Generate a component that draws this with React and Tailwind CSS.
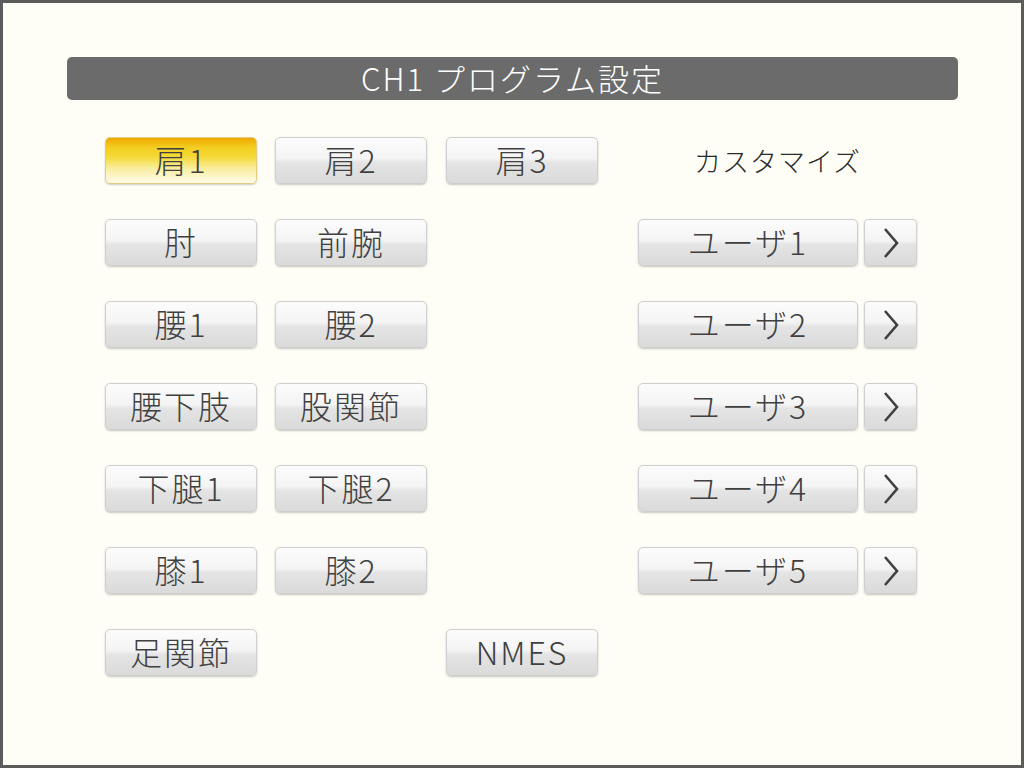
import React from 'react';

const FONT = { fontFamily: '"Noto Sans CJK JP", "Noto Sans", sans-serif' };

const grayBtn =
  'bg-[linear-gradient(to_bottom,#fcfcfc_0%,#f4f4f4_45%,#e4e4e4_55%,#dadada_100%)] border border-[#cfcfcf] shadow-[0_1px_2px_rgba(0,0,0,0.22)]';
const activeBtn =
  'bg-[linear-gradient(to_bottom,#efa800_0%,#f3cf22_22%,#f4d936_42%,#f9eea0_68%,#fefbea_100%)] border border-[#e2cc80] shadow-[0_1px_2px_rgba(0,0,0,0.2)]';

const Btn = ({ label, active, w = 'w-[152px]' }) => (
  <div
    className={`${w} h-[47px] rounded-[5px] flex items-center justify-center pb-[4px] text-[32px] font-light leading-none text-[#404040] ${
      active ? activeBtn : grayBtn
    }`}
  >
    <span className="tracking-[2px]">{label}</span>
  </div>
);

const Spacer = () => <div className="w-[152px] h-[47px]" />;

const UserRow = ({ n }) => (
  <div className="flex ml-[40px] gap-[6px]">
    <Btn label={`ユーザ${n}`} w="w-[220px]" />
    <div className={`w-[53px] h-[47px] rounded-[4px] flex items-center justify-center ${grayBtn}`}>
      <svg width="18" height="32" viewBox="0 0 18 32">
        <polyline points="3,2 15,16 3,30" fill="none" stroke="#404040" strokeWidth="2.6" />
      </svg>
    </div>
  </div>
);

const rows = [
  { left: ['肩1', '肩2', '肩3'], custom: true },
  { left: ['肘', '前腕', null], user: 1 },
  { left: ['腰1', '腰2', null], user: 2 },
  { left: ['腰下肢', '股関節', null], user: 3 },
  { left: ['下腿1', '下腿2', null], user: 4 },
  { left: ['膝1', '膝2', null], user: 5 },
  { left: ['足関節', null, 'NMES'] },
];

export default function App() {
  return (
    <div
      className="w-[1024px] h-[768px] bg-[#fefef6] border-[3px] border-[#5c5c5c] flex flex-col"
      style={FONT}
    >
      <div className="mt-[54px] ml-[64px] w-[891px] h-[43px] rounded-[5px] bg-[#6b6b6b] flex items-center justify-center pb-[3px]">
        <span className="text-white text-[31px] font-light leading-none tracking-[2px]">CH1 プログラム設定</span>
      </div>

      <div className="mt-[37px] ml-[102px] flex flex-col gap-[35px]">
        {rows.map((r, i) => (
          <div key={i} className="flex items-center">
            {r.left.map((l, j) => (
              <div key={j} className={j === 0 ? '' : j === 1 ? 'ml-[18px]' : 'ml-[19px]'}>
                {l ? <Btn label={l} active={i === 0 && j === 0} /> : <Spacer />}
              </div>
            ))}
            {r.custom && (
              <div className="ml-[40px] w-[279px] text-center text-[27px] font-light leading-none text-[#2a2a2a] tracking-[1px]">
                カスタマイズ
              </div>
            )}
            {r.user && <UserRow n={r.user} />}
          </div>
        ))}
      </div>
    </div>
  );
}
